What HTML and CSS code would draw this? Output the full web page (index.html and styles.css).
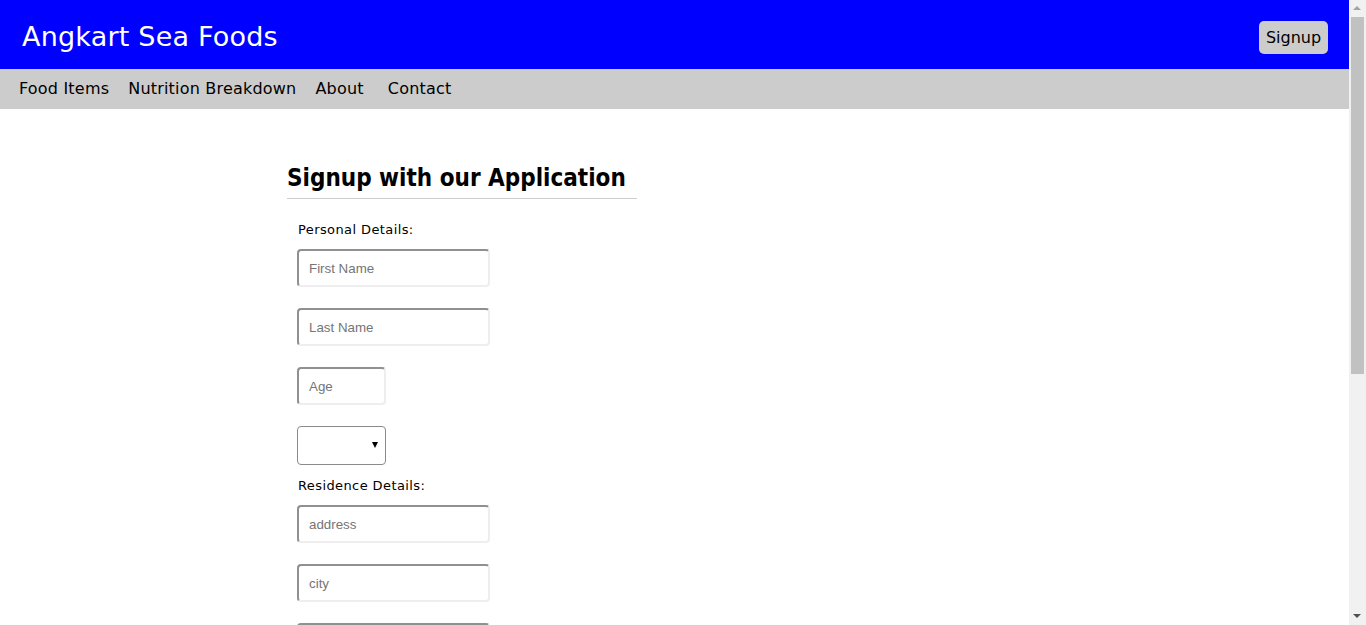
FILE: index.html
```html
<!DOCTYPE html>
<html lang="en">
<head>
<meta charset="utf-8">
<title>Angkart Sea Foods - Signup</title>
<link rel="stylesheet" href="styles.css">
</head>
<body>
<div class="page">
  <header class="topbar">
    <h1 class="brand">Angkart Sea Foods</h1>
    <button class="signup-btn" type="button">Signup</button>
  </header>
  <nav class="menu">
    <a href="#">Food Items</a>
    <a href="#">Nutrition Breakdown</a>
    <a href="#">About</a>
    <a href="#" class="contact">Contact</a>
  </nav>
  <main class="signup">
    <h2 class="title">Signup with our Application</h2>
    <form class="form">
      <p class="label">Personal Details:</p>
      <input class="field" type="text" placeholder="First Name">
      <input class="field" type="text" placeholder="Last Name">
      <input class="field short" type="text" placeholder="Age">
      <span class="select-wrap">
        <select class="choice">
          <option></option>
          <option>Male</option>
          <option>Female</option>
        </select>
      </span>
      <p class="label residence">Residence Details:</p>
      <input class="field" type="text" placeholder="address">
      <input class="field" type="text" placeholder="city">
      <input class="field" type="text" placeholder="state">
      <input class="field" type="text" placeholder="pincode">
      <p class="label">Contact Details:</p>
      <input class="field" type="text" placeholder="email">
      <input class="field" type="text" placeholder="phone">
      <input class="field" type="password" placeholder="password">
      <button class="submit" type="submit">Submit</button>
    </form>
  </main>
</div>
<div class="scrollbar" aria-hidden="true">
  <span class="arrow up"></span>
  <span class="thumb"></span>
  <span class="arrow down"></span>
</div>
</body>
</html>
```
FILE: styles.css
```css
html, body {
  margin: 0;
  padding: 0;
}
body {
  font-family: "DejaVu Sans", sans-serif;
  color: #000;
  background: #fff;
}
.page {
  margin-right: 17px;
}
.topbar {
  background: #0000ff;
  height: 69px;
  display: flex;
  align-items: center;
  justify-content: space-between;
  padding: 0 21px 0 22px;
  box-sizing: border-box;
}
.brand {
  margin: 3px 0 0 0;
  color: #fff;
  font-size: 27px;
  font-weight: normal;
  letter-spacing: 0.2px;
}
.signup-btn {
  font-family: "DejaVu Sans", sans-serif;
  font-size: 16px;
  background: #cccccc;
  border: none;
  border-radius: 5px;
  height: 33px;
  width: 69px;
  padding: 0;
  color: #000;
  margin-top: 6px;
}
.menu {
  background: #cccccc;
  height: 40px;
  display: flex;
  align-items: center;
  padding-left: 19px;
  gap: 19px;
}
.menu a {
  color: #000;
  text-decoration: none;
  font-size: 16px;
  letter-spacing: 0.2px;
  margin-top: -1px;
}
.menu a.contact {
  margin-left: 5px;
}
.signup {
  width: 350px;
  margin: 55px 0 40px 287px;
}
.title {
  margin: 0;
  font-family: "DejaVu Sans Condensed", "DejaVu Sans", sans-serif;
  font-stretch: condensed;
  font-size: 24px;
  font-weight: bold;
  white-space: nowrap;
  padding-bottom: 6px;
  border-bottom: 1px solid #cccccc;
  line-height: 28px;
}
.form {
  display: flex;
  flex-direction: column;
  align-items: flex-start;
  padding-left: 10px;
}
.label {
  margin: 23px 0 11px 1px;
  font-size: 13px;
  letter-spacing: 0.4px;
  line-height: 16px;
}
.label.residence {
  margin-top: 13px;
}
.field {
  width: 193px;
  height: 38px;
  box-sizing: border-box;
  border: 2px solid #eeeeee;
  border-top-color: #909090;
  border-left-color: #909090;
  border-radius: 4px;
  padding: 0 10px;
  font-family: "Liberation Sans", Arial, sans-serif;
  font-size: 13.333px;
  margin: 0 0 21px 0;
  outline: none;
}
.field::placeholder {
  color: #757575;
}
.field.short {
  width: 89px;
}
.select-wrap {
  position: relative;
  display: block;
  width: 89px;
  height: 39px;
}
.choice {
  -webkit-appearance: none;
  appearance: none;
  width: 89px;
  height: 39px;
  box-sizing: border-box;
  border: 1px solid #8a8a8a;
  border-radius: 4px;
  background: #fff;
  font-size: 13.333px;
  margin: 0;
  outline: none;
}
.select-wrap::after {
  content: "";
  position: absolute;
  right: 8px;
  top: 16px;
  border-left: 3.5px solid transparent;
  border-right: 3.5px solid transparent;
  border-top: 6px solid #000;
  pointer-events: none;
}
.submit {
  font-family: "DejaVu Sans", sans-serif;
  font-size: 16px;
  background: #cccccc;
  border: none;
  border-radius: 5px;
  height: 33px;
  padding: 0 8px;
  margin-bottom: 60px;
}
.scrollbar {
  position: fixed;
  top: 0;
  right: 0;
  width: 17px;
  height: 100vh;
  background: #f1f1f1;
}
.thumb {
  position: absolute;
  left: 2px;
  right: 2px;
  top: 17px;
  height: 357px;
  background: #c1c1c1;
}
.arrow {
  position: absolute;
  left: 4px;
  border-left: 4px solid transparent;
  border-right: 4px solid transparent;
}
.arrow.up {
  top: 6px;
  border-bottom: 4px solid #a3a3a3;
}
.arrow.down {
  bottom: 7px;
  border-top: 4px solid #505050;
}
```
